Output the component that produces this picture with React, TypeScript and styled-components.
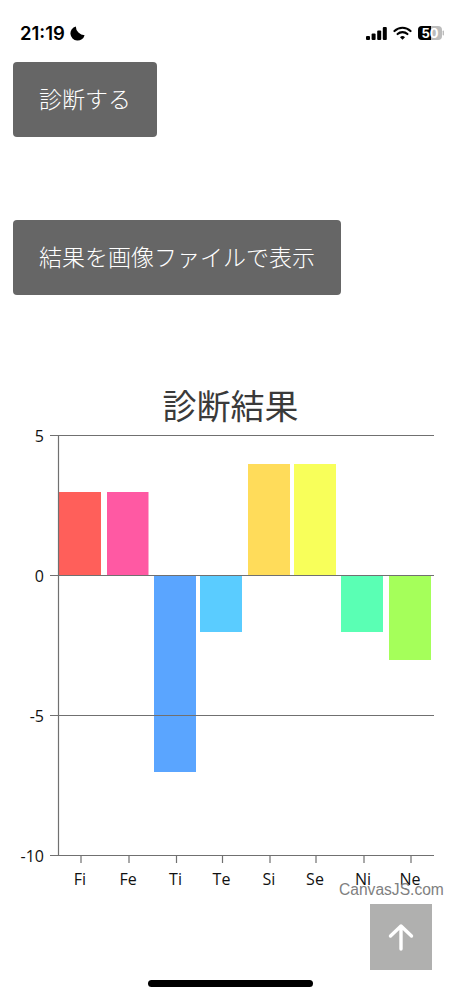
import React from 'react';
import styled, { createGlobalStyle } from 'styled-components';

const CJK = '"Noto Sans CJK JP", "Liberation Sans", sans-serif';

const GlobalStyle = createGlobalStyle`
  html, body {
    margin: 0;
    padding: 0;
    background: #fff;
  }
`;

const Page = styled.div`
  position: relative;
  width: 461px;
  height: 999px;
  overflow: hidden;
  background: #fff;
  font-family: ${CJK};
`;

const StatusBar = styled.div`
  height: 62px;
  box-sizing: border-box;
  padding: 22px 17px 0 20px;
  display: flex;
  justify-content: space-between;
  align-items: flex-start;
`;

const TimeGroup = styled.div`
  display: flex;
  align-items: center;
  gap: 5px;
  height: 22px;
  font-family: Inter, "Liberation Sans", sans-serif;
  font-size: 18.5px;
  font-weight: 600;
  color: #000;
`;

const StatusIcons = styled.div`
  display: flex;
  align-items: center;
  gap: 6px;
  height: 22px;
`;

const ActionButton = styled.button<{ $width: number; $gapBelow: number }>`
  display: block;
  width: ${(p) => p.$width}px;
  height: 75px;
  margin: 0 0 ${(p) => p.$gapBelow}px 13px;
  padding: 0 0 4px 0;
  border: none;
  border-radius: 4px;
  background: #666;
  color: #fff;
  font-family: ${CJK};
  font-size: 23px;
  font-weight: 300;
  text-align: center;
`;

const ChartSection = styled.section`
  display: flex;
  flex-direction: column;
`;

const ChartTitle = styled.h2`
  margin: 4px 0 0;
  height: 44px;
  line-height: 48px;
  font-size: 34px;
  font-weight: 400;
  color: #3a3a3a;
  text-align: center;
`;

const Credit = styled.span`
  position: absolute;
  left: 339px;
  top: 881px;
  font-family: "Liberation Sans", sans-serif;
  font-size: 15.6px;
  line-height: 18px;
  color: #808080;
`;

const TopButton = styled.button`
  position: absolute;
  left: 370px;
  top: 904px;
  width: 62px;
  height: 66px;
  padding: 0;
  border: none;
  background: #b0b0af;
  display: flex;
  align-items: center;
  justify-content: center;
`;

const HomeIndicator = styled.div`
  position: absolute;
  left: 148px;
  top: 980px;
  width: 165px;
  height: 7px;
  border-radius: 4px;
  background: #000;
`;

type Bar = { label: string; x: number; width: number; value: number; color: string; tick: number };

const bars: Bar[] = [
  { label: 'Fi', x: 59, width: 42, value: 3, color: '#ff5f5a', tick: 81 },
  { label: 'Fe', x: 107, width: 41.5, value: 3, color: '#ff59a3', tick: 129 },
  { label: 'Ti', x: 154, width: 42, value: -7, color: '#5aa5ff', tick: 176.5 },
  { label: 'Te', x: 200, width: 42, value: -2, color: '#5accff', tick: 222.5 },
  { label: 'Si', x: 248, width: 42, value: 4, color: '#ffdc5a', tick: 270 },
  { label: 'Se', x: 294, width: 42, value: 4, color: '#f8ff5a', tick: 316 },
  { label: 'Ni', x: 341, width: 42, value: -2, color: '#5affb4', tick: 364 },
  { label: 'Ne', x: 389, width: 42, value: -3, color: '#a5ff5a', tick: 411 },
];

// the svg starts at page y=425
const TOP = 11;
const UNIT = 28;
const ZERO = TOP + UNIT * 5;
const BOTTOM = TOP + UNIT * 15;
const axisFont = '"Open Sans", "Noto Sans", sans-serif';
const LINE = '#707070';

const Chart = () => (
  <svg width={461} height={470} viewBox="0 0 461 470" style={{ display: 'block' }}>
    {bars.map((b) => (
      <rect
        key={b.label}
        x={b.x}
        y={b.value > 0 ? ZERO - b.value * UNIT : ZERO}
        width={b.width}
        height={Math.abs(b.value) * UNIT}
        fill={b.color}
      />
    ))}
    {[5, 0, -5, -10].map((v) => {
      const y = ZERO - v * UNIT;
      return (
        <g key={v}>
          <line x1={50} x2={434} y1={y - 0.5} y2={y - 0.5} stroke={LINE} strokeWidth={1.2} />
          <text x={44} y={y + 6} textAnchor="end" fontFamily={axisFont} fontSize={16} fill="#111">
            {v}
          </text>
        </g>
      );
    })}
    <line x1={58.5} x2={58.5} y1={TOP} y2={BOTTOM} stroke={LINE} strokeWidth={1.2} />
    {bars.map((b) => (
      <g key={b.label}>
        <line x1={b.tick} x2={b.tick} y1={BOTTOM} y2={BOTTOM + 7} stroke={LINE} strokeWidth={1.2} />
        <text x={b.tick - 1} y={BOTTOM + 29} textAnchor="middle" fontFamily={axisFont} fontSize={16} fill="#111">
          {b.label}
        </text>
      </g>
    ))}
  </svg>
);

const App = () => (
  <Page>
    <GlobalStyle />
    <StatusBar>
      <TimeGroup>
        <span>21:19</span>
        <svg width={15} height={15} viewBox="0 0 15 15">
          <path d="M5.8 0.4 A7.2 7.2 0 1 0 14.6 9.2 A9 9 0 0 1 5.8 0.4 Z" fill="#000" />
        </svg>
      </TimeGroup>
      <StatusIcons>
        <svg width={21} height={13} viewBox="0 0 21 13">
          <rect x={0} y={9} width={4} height={4} rx={1} fill="#000" />
          <rect x={5.6} y={6.5} width={4} height={6.5} rx={1} fill="#000" />
          <rect x={11.2} y={3.5} width={4} height={9.5} rx={1} fill="#000" />
          <rect x={16.8} y={0} width={4} height={13} rx={1} fill="#000" />
        </svg>
        <svg width={19} height={14} viewBox="0 0 19 14">
          <path d="M1.5 5 A11.5 11.5 0 0 1 17.5 5" fill="none" stroke="#000" strokeWidth={2.2} strokeLinecap="round" />
          <path d="M4.6 8 A7.2 7.2 0 0 1 14.4 8" fill="none" stroke="#000" strokeWidth={2.2} strokeLinecap="round" />
          <path d="M7 11.2 L9.5 13.8 L12 11.2 A3.6 3.6 0 0 0 7 11.2 Z" fill="#000" />
        </svg>
        <svg width={26} height={14} viewBox="0 0 26 14">
          <rect x={0} y={0} width={24} height={14} rx={4} fill="#bcbcbc" />
          <path d="M4 0 H13 V14 H4 A4 4 0 0 1 0 10 V4 A4 4 0 0 1 4 0 Z" fill="#000" />
          <rect x={24.6} y={4.5} width={1.4} height={5} rx={0.7} fill="#bcbcbc" />
          <text x={12} y={11.6} textAnchor="middle" fontFamily="Inter, sans-serif" fontWeight={700} fontSize={13} fill="#fff">
            50
          </text>
        </svg>
      </StatusIcons>
    </StatusBar>
    <ActionButton $width={144} $gapBelow={83}>診断する</ActionButton>
    <ActionButton $width={328} $gapBelow={82}>結果を画像ファイルで表示</ActionButton>
    <ChartSection>
      <ChartTitle>診断結果</ChartTitle>
      <Chart />
    </ChartSection>
    <Credit>CanvasJS.com</Credit>
    <TopButton aria-label="top">
      <svg width={26} height={28} viewBox="0 0 26 28">
        <path
          d="M13 26 V3 M2.5 13 L13 3 L23.5 13"
          fill="none"
          stroke="#fff"
          strokeWidth={3.4}
          strokeLinecap="round"
          strokeLinejoin="round"
        />
      </svg>
    </TopButton>
    <HomeIndicator />
  </Page>
);

export default App;
